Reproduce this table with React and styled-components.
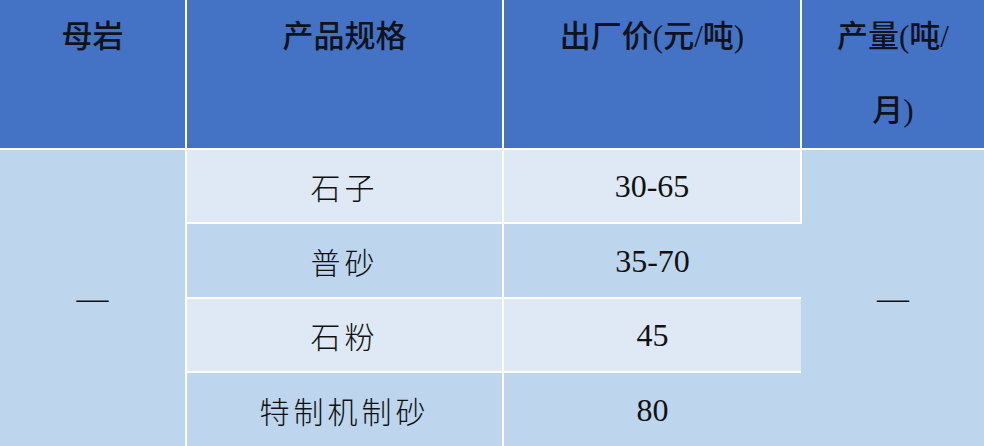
import React from "react";
import styled, { createGlobalStyle } from "styled-components";

const GlobalStyle = createGlobalStyle`
  html, body {
    margin: 0;
    padding: 0;
    background: #ffffff;
  }
`;

const Table = styled.table`
  width: 984px;
  height: 446px;
  table-layout: fixed;
  border-collapse: collapse;
  color: #111111;
`;

const HeadCell = styled.th`
  background: #4472c4;
  height: 146px;
  padding: 0;
  vertical-align: top;
  text-align: center;
  font-family: "Liberation Serif", "Noto Sans CJK SC", serif;
  font-size: 31px;
  font-weight: 500;
  line-height: 74px;
  color: #10131c;
  border-right: 2px solid #ffffff;
  border-bottom: 2px solid #ffffff;
  &:last-child {
    border-right: none;
  }
`;

const Latin = styled.span`
  font-family: "Liberation Serif", "Times New Roman", serif;
  font-weight: 400;
`;

const Row = styled.tr`
  height: ${(p) => p.$h}px;
`;

const Cell = styled.td`
  background: ${(p) => (p.$light ? "#dee9f5" : "#bdd6ee")};
  padding: 0;
  text-align: center;
  vertical-align: middle;
  font-family: ${(p) =>
    p.$num
      ? `"Liberation Serif", "Times New Roman", serif`
      : `"Noto Sans CJK SC", sans-serif`};
  font-size: ${(p) => (p.$num ? "32px" : "30px")};
  font-weight: ${(p) => (p.$num ? 400 : 300)};
  letter-spacing: ${(p) => (p.$spaced ? "4px" : "0")};
  line-height: 1;
  border-right: 2px solid #ffffff;
  border-bottom: 2px solid #ffffff;
  &:last-child {
    border-right: none;
  }
`;

const SpanCell = styled(Cell)`
  background: #bdd6ee;
`;

const columns = [186, 317, 298, 183];

const rows = [
  { spec: "石子", price: "30-65", h: 74 },
  { spec: "普砂", price: "35-70", h: 75 },
  { spec: "石粉", price: "45", h: 74 },
  { spec: "特制机制砂", price: "80", h: 75 },
];

export default function App() {
  return (
    <>
      <GlobalStyle />
      <Table>
        <colgroup>
          {columns.map((w, i) => (
            <col key={i} style={{ width: w }} />
          ))}
        </colgroup>
        <thead>
          <tr>
            <HeadCell>母岩</HeadCell>
            <HeadCell>产品规格</HeadCell>
            <HeadCell>
              出厂价<Latin>(</Latin>元<Latin>/</Latin>吨<Latin>)</Latin>
            </HeadCell>
            <HeadCell>
              产量<Latin>(</Latin>吨<Latin>/</Latin>
              <br />
              月<Latin>)</Latin>
            </HeadCell>
          </tr>
        </thead>
        <tbody>
          {rows.map((r, i) => (
            <Row key={r.spec} $h={r.h}>
              {i === 0 && (
                <SpanCell rowSpan={4} $num>
                  —
                </SpanCell>
              )}
              <Cell $light={i % 2 === 0} $spaced>
                {r.spec}
              </Cell>
              <Cell $light={i % 2 === 0} $num>
                {r.price}
              </Cell>
              {i === 0 && (
                <SpanCell rowSpan={4} $num>
                  —
                </SpanCell>
              )}
            </Row>
          ))}
        </tbody>
      </Table>
    </>
  );
}
